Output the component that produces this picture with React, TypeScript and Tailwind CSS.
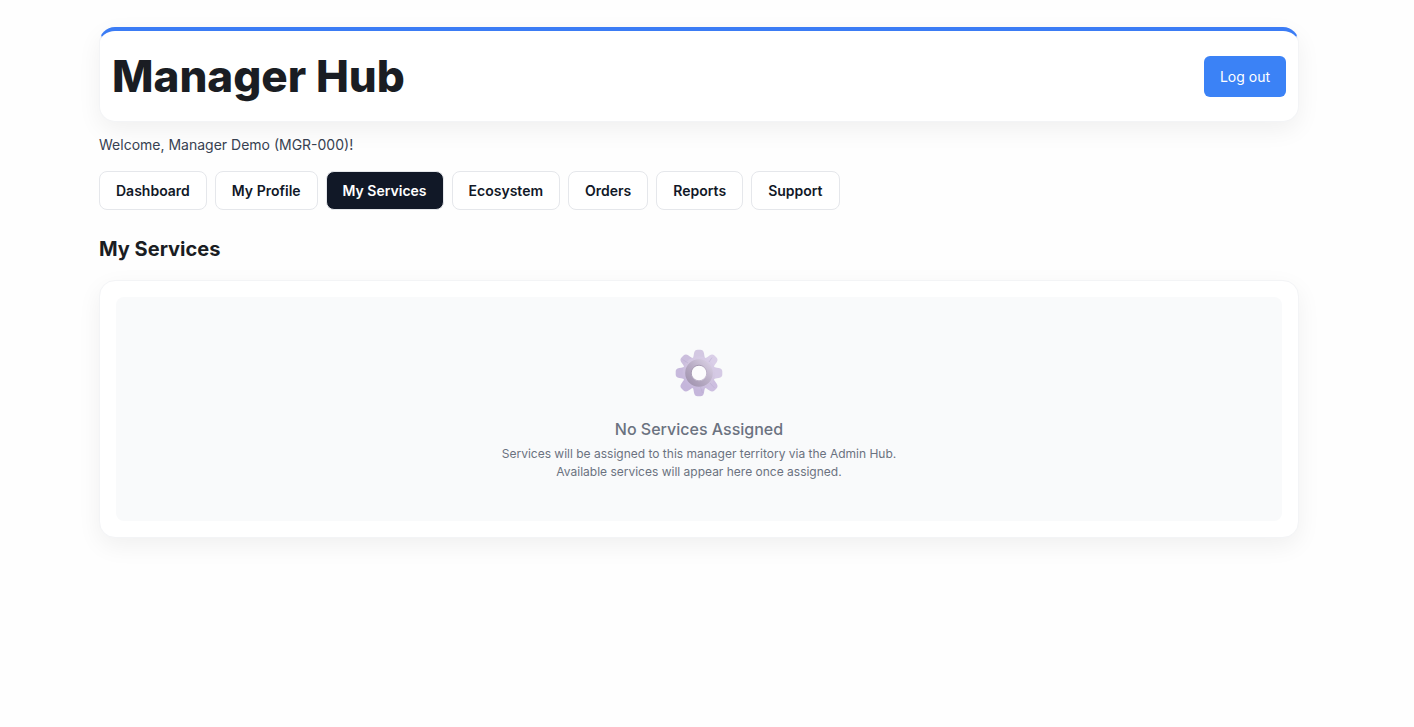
const tabs = ["Dashboard", "My Profile", "My Services", "Ecosystem", "Orders", "Reports", "Support"];
const teeth = [
  { angle: 0, fill: "#d3c8e2" },
  { angle: 45, fill: "#dacfe8" },
  { angle: 90, fill: "#d5cae5" },
  { angle: 135, fill: "#cdbfe0" },
  { angle: 180, fill: "#c5b6db" },
  { angle: 225, fill: "#c5b6db" },
  { angle: 270, fill: "#c7b9dc" },
  { angle: 315, fill: "#cbbedd" },
];

function Gear() {
  return (
    <svg viewBox="0 0 48 48" className="h-12 w-12" aria-hidden="true">
      <defs>
        <linearGradient id="body" gradientUnits="userSpaceOnUse" x1="36" y1="8" x2="12" y2="40">
          <stop offset="0" stopColor="#dacfe8" />
          <stop offset="0.5" stopColor="#cfc3df" />
          <stop offset="1" stopColor="#c4b5db" />
        </linearGradient>
        <linearGradient id="ring" gradientUnits="userSpaceOnUse" x1="34" y1="14" x2="14" y2="34">
          <stop offset="0" stopColor="#d5cbe0" />
          <stop offset="0.5" stopColor="#b9adc5" />
          <stop offset="1" stopColor="#a396b1" />
        </linearGradient>
        <linearGradient id="rim" gradientUnits="userSpaceOnUse" x1="18" y1="17" x2="30" y2="31">
          <stop offset="0" stopColor="#9f93ab" />
          <stop offset="1" stopColor="#c7bcd2" />
        </linearGradient>
      </defs>
      {teeth.map(({ angle, fill }) => (
        <path
          key={angle}
          d="M17 12 C18.2 9.5 18.6 6.8 19 4.2 C19.4 1.7 20.8 0.7 22.6 0.7 H25.4 C27.2 0.7 28.6 1.7 29 4.2 C29.4 6.8 29.8 9.5 31 12 Z"
          fill={fill}
          transform={`rotate(${angle} 24 24)`}
        />
      ))}
      <circle cx="24" cy="24" r="16.5" fill="url(#body)" />
      <path
        d="M7.5 10.5 L13 14 M25.5 38 L27.5 44 M35 34 L39.5 39 M34 13 L37 8.5"
        stroke="#b9abcd"
        strokeWidth="0.5"
        fill="none"
      />
      <circle cx="24" cy="24" r="10.8" fill="none" stroke="url(#ring)" strokeWidth="6" />
      <circle cx="24" cy="24" r="7.8" fill="#fcfcfd" stroke="url(#rim)" strokeWidth="1" />
    </svg>
  );
}

export default function App() {
  return (
    <div className="min-h-screen bg-[#fefefe] pr-4 font-['Inter',sans-serif] text-[#1a1d23]">
      <div className="mx-auto max-w-[1200px] pt-[27px]">
        <header className="flex items-center justify-between rounded-2xl border border-t-4 border-[#f3f4f6] border-t-[#3b7cf5] bg-white px-3 py-5 shadow-[0_8px_24px_rgba(0,0,0,0.06)]">
          <h1 className="text-[44px] leading-[50px] font-extrabold">Manager Hub</h1>
          <button type="button" className="rounded-md bg-[#3b82f6] px-4 py-2.5 text-sm leading-[21px] text-white">
            Log out
          </button>
        </header>
        <p className="mt-3 text-sm leading-[22px] text-[#374151]">Welcome, Manager Demo (MGR-000)!</p>
        <nav className="mt-[15px] flex flex-wrap gap-2">
          {tabs.map((tab) => (
            <button
              key={tab}
              type="button"
              aria-current={tab === "My Services" ? "page" : undefined}
              className={
                tab === "My Services"
                  ? "h-[39px] rounded-lg border border-[#e5e7eb] bg-[#111827] px-4 text-sm font-semibold text-white"
                  : "h-[39px] rounded-lg border border-[#e5e7eb] bg-white px-4 text-sm font-semibold text-[#111827]"
              }
            >
              {tab}
            </button>
          ))}
        </nav>
        <h2 className="mt-6 text-xl leading-[30px] font-bold">My Services</h2>
        <section className="mt-4 rounded-2xl border border-[#f3f4f6] bg-white p-4 shadow-[0_8px_24px_rgba(0,0,0,0.06)]">
          <div className="flex flex-col items-center rounded-lg bg-[#f9fafb] px-5 pt-[52px] pb-10 text-center text-[#6b7280]">
            <Gear />
            <h3 className="mt-5 text-base leading-6 font-medium">No Services Assigned</h3>
            <p className="mt-1 text-xs leading-[18px]">
              Services will be assigned to this manager territory via the Admin Hub.
              <br />
              Available services will appear here once assigned.
            </p>
          </div>
        </section>
      </div>
    </div>
  );
}
